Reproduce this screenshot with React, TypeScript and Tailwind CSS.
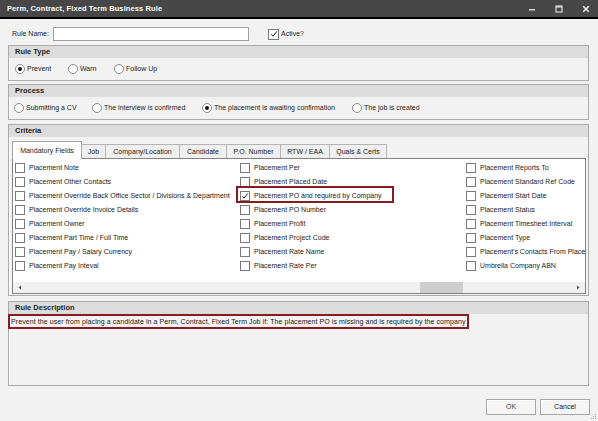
import type { ReactNode } from 'react'

const columns: { label: string; checked?: boolean; flagged?: boolean }[][] = [
  [
    { label: 'Placement Note' },
    { label: 'Placement Other Contacts' },
    { label: 'Placement Override Back Office Sector / Divisions & Department' },
    { label: 'Placement Override Invoice Details' },
    { label: 'Placement Owner' },
    { label: 'Placement Part Time / Full Time' },
    { label: 'Placement Pay / Salary Currency' },
    { label: 'Placement Pay Inteval' },
  ],
  [
    { label: 'Placement Per' },
    { label: 'Placement Placed Date' },
    { label: 'Placement PO and required by Company', checked: true, flagged: true },
    { label: 'Placement PO Number' },
    { label: 'Placement Profit' },
    { label: 'Placement Project Code' },
    { label: 'Placement Rate Name' },
    { label: 'Placement Rate Per' },
  ],
  [
    { label: 'Placement Reports To' },
    { label: 'Placement Standard Ref Code' },
    { label: 'Placement Start Date' },
    { label: 'Placement Status' },
    { label: 'Placement Timesheet Interval' },
    { label: 'Placement Type' },
    { label: "Placement's Contacts From Place" },
    { label: 'Umbrella Company ABN' },
  ],
]

const tabs = [
  { label: 'Mandatory Fields', w: 'w-[70px]' },
  { label: 'Job', w: 'w-[25px]' },
  { label: 'Company/Location', w: 'w-[75px]' },
  { label: 'Candidate', w: 'w-[48px]' },
  { label: 'P.O. Number', w: 'w-[55px]' },
  { label: 'RTW / EAA', w: 'w-[50px]' },
  { label: 'Quals & Certs', w: 'w-[58px]' },
]

function CheckBox({ checked, size = 'h-[10px] w-[10px]' }: { checked?: boolean; size?: string }) {
  return (
    <span className={`flex shrink-0 items-center justify-center border border-[#7a7a7a] bg-white ${size}`}>
      {checked && (
        <svg width="8" height="8" viewBox="0 0 8 8">
          <path d="M1.3 4.3 L3 6.2 L6.8 1.4" fill="none" stroke="#1a1a1a" strokeWidth="1" />
        </svg>
      )}
    </span>
  )
}

function Radio({ label, checked, w }: { label: string; checked?: boolean; w: string }) {
  return (
    <div className={`flex shrink-0 items-center gap-[2px] ${w}`}>
      <span className="flex h-[10px] w-[10px] shrink-0 items-center justify-center rounded-full border border-[#8a8a8a] bg-white">
        {checked && <span className="h-[4px] w-[4px] rounded-full bg-[#111]" />}
      </span>
      <span className="whitespace-nowrap">{label}</span>
    </div>
  )
}

function Group({ title, className = '', children }: { title: string; className?: string; children: ReactNode }) {
  return (
    <div className={`ml-[8px] w-[581px] border border-[#ababab] shadow-[inset_1px_1px_0_#ffffff] ${className}`}>
      <div className="flex h-[12px] items-center bg-[#dcdcdc] pl-[6px] text-[7.5px] font-bold">{title}</div>
      {children}
    </div>
  )
}

export default function App() {
  return (
    <div className="relative flex h-[421px] w-[598px] flex-col overflow-hidden bg-[#f2f2f2] font-['Liberation_Sans',Arial,sans-serif] text-[7px] leading-[10px] text-[#1c1c1c]">
      {/* title bar */}
      <div className="flex h-[19px] shrink-0 items-center justify-between border-b-2 border-black bg-[#474747] pl-[7px] pr-[8px]">
        <span className="text-[7.5px] font-bold tracking-[0.1px] text-white">Perm, Contract, Fixed Term Business Rule</span>
        <div className="flex items-center gap-[19px]">
          <svg width="8" height="8" viewBox="0 0 8 8">
            <rect x="1" y="4" width="6" height="1.5" fill="#d8d8d8" />
          </svg>
          <svg width="8" height="8" viewBox="0 0 8 8">
            <rect x="1" y="1" width="6" height="6" fill="none" stroke="#d8d8d8" strokeWidth="1.2" />
            <rect x="1" y="1" width="6" height="1.6" fill="#d8d8d8" />
          </svg>
          <svg width="8" height="8" viewBox="0 0 8 8">
            <path d="M1.2 1.2 L6.8 6.8 M6.8 1.2 L1.2 6.8" stroke="#e8e8e8" strokeWidth="1.6" />
          </svg>
        </div>
      </div>

      {/* rule name */}
      <div className="mt-[8px] flex h-[14px] items-center pl-[12px]">
        <span className="w-[41px] whitespace-nowrap">Rule Name:</span>
        <div className="h-[14px] w-[196px] border border-[#a3a3a3] bg-white" />
        <div className="ml-[19px] flex items-center gap-[2px]">
          <CheckBox checked size="h-[11px] w-[11px]" />
          <span>Active?</span>
        </div>
      </div>

      <Group title="Rule Type" className="mt-[4px]">
        <div className="flex h-[22px] items-center pl-[6px]">
          <Radio label="Prevent" checked w="w-[53px]" />
          <Radio label="Warn" w="w-[46px]" />
          <Radio label="Follow Up" w="w-[60px]" />
        </div>
      </Group>

      <Group title="Process" className="mt-[3px]">
        <div className="flex h-[22px] items-center pl-[5px]">
          <Radio label="Submitting a CV" w="w-[78px]" />
          <Radio label="The interview is confirmed" w="w-[110px]" />
          <Radio label="The placement is awaiting confirmation" checked w="w-[150px]" />
          <Radio label="The job is created" w="w-[90px]" />
        </div>
      </Group>

      <Group title="Criteria" className="mt-[4px] pb-[1px]">
        <div className="px-[3px] pt-[4px]">
          <div className="flex h-[17px] items-end">
            {tabs.map((t, i) =>
              i === 0 ? (
                <div
                  key={t.label}
                  className={`relative z-10 -mb-px flex h-[18px] items-center justify-center border border-b-0 border-[#a8a8a8] bg-white ${t.w}`}
                >
                  {t.label}
                </div>
              ) : (
                <div
                  key={t.label}
                  className={`-ml-px flex h-[14px] items-center justify-center border border-b-0 border-[#b4b4b4] bg-[#efefef] ${t.w}`}
                >
                  {t.label}
                </div>
              ),
            )}
          </div>
          <div className="flex h-[136px] w-[574px] flex-col border border-[#848484] bg-white">
            <div className="flex flex-1 overflow-hidden pl-[2px] pt-[2px]">
              {columns.map((col, ci) => (
                <div key={ci} className={`flex shrink-0 flex-col ${ci === 0 ? 'w-[225px]' : 'w-[226px]'}`}>
                  {col.map((item) => (
                    <div key={item.label} className="relative flex h-[14px] items-center gap-[4px] whitespace-nowrap">
                      <CheckBox checked={item.checked} />
                      <span>{item.label}</span>
                      {item.flagged && (
                        <div className="absolute left-[-4px] top-[-3px] h-[17px] w-[158px] border-2 border-[#861c1f]" />
                      )}
                    </div>
                  ))}
                </div>
              ))}
            </div>
            <div className="flex h-[11px] shrink-0 items-center bg-[#f0f0f0]">
              <div className="flex w-[14px] justify-center">
                <svg width="4" height="5" viewBox="0 0 4 5">
                  <path d="M3 0.5 L0.5 2.5 L3 4.5 Z" fill="#555" />
                </svg>
              </div>
              <div className="flex h-full flex-1">
                <div className="ml-[393px] h-full w-[43px] bg-[#cdcdcd]" />
              </div>
              <div className="flex w-[14px] justify-center">
                <svg width="4" height="5" viewBox="0 0 4 5">
                  <path d="M1 0.5 L3.5 2.5 L1 4.5 Z" fill="#555" />
                </svg>
              </div>
            </div>
          </div>
        </div>
      </Group>

      <Group title="Rule Description" className="mt-[5px] h-[85px]">
        <div className="-ml-px inline-flex h-[15px] items-center whitespace-nowrap border-2 border-[#861c1f] px-[1px] tracking-[0.08px]">
          Prevent the user from placing a candidate in a Perm, Contract, Fixed Term Job if: The placement PO is missing and is required by the company
        </div>
      </Group>

      <div className="mt-[13px] flex justify-end gap-[4px] pr-[8px]">
        <button className="flex h-[16px] w-[50px] items-center justify-center border border-[#a6a6a6] bg-[#f5f5f5] text-[#444] shadow-[inset_1px_1px_0_#ffffff]">
          OK
        </button>
        <button className="flex h-[16px] w-[50px] items-center justify-center border border-[#a6a6a6] bg-[#f5f5f5] shadow-[inset_1px_1px_0_#ffffff]">
          Cancel
        </button>
      </div>

      <svg className="absolute bottom-[1px] right-[1px]" width="7" height="7" viewBox="0 0 7 7">
        <rect x="5" y="1" width="1" height="1" fill="#9a9a9a" />
        <rect x="3" y="3" width="1" height="1" fill="#9a9a9a" />
        <rect x="5" y="3" width="1" height="1" fill="#9a9a9a" />
        <rect x="1" y="5" width="1" height="1" fill="#9a9a9a" />
        <rect x="3" y="5" width="1" height="1" fill="#9a9a9a" />
        <rect x="5" y="5" width="1" height="1" fill="#9a9a9a" />
      </svg>
    </div>
  )
}
